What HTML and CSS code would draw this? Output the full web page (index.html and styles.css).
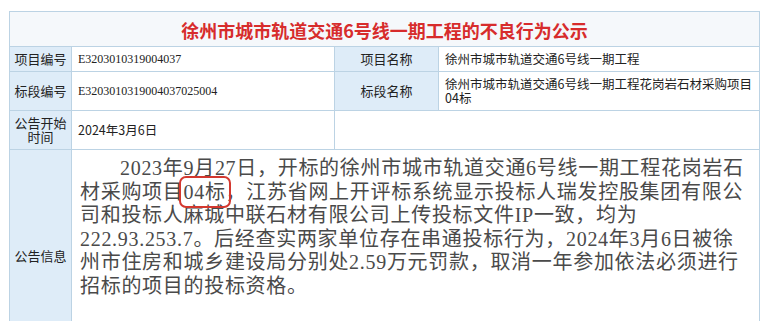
FILE: index.html
```html
<!DOCTYPE html>
<html lang="zh-CN">
<head>
<meta charset="utf-8">
<title>不良行为公示</title>
<link rel="stylesheet" href="styles.css">
</head>
<body>
<table class="notice">
  <colgroup>
    <col class="c1"><col class="c2"><col class="c3"><col class="c4">
  </colgroup>
  <tr class="r-title">
    <td colspan="4" class="title">徐州市城市轨道交通6号线一期工程的不良行为公示</td>
  </tr>
  <tr class="r1">
    <td class="label">项目编号</td>
    <td class="code">E3203010319004037</td>
    <td class="label">项目名称</td>
    <td class="val">徐州市城市轨道交通6号线一期工程</td>
  </tr>
  <tr class="r2">
    <td class="label">标段编号</td>
    <td class="code">E3203010319004037025004</td>
    <td class="label">标段名称</td>
    <td class="val">徐州市城市轨道交通6号线一期工程花岗岩石材采购项目04标</td>
  </tr>
  <tr class="r3">
    <td class="label">公告开始时间</td>
    <td class="val">2024年3月6日</td>
    <td colspan="2" class="empty"></td>
  </tr>
  <tr class="r4">
    <td class="label">公告信息</td>
    <td colspan="3" class="content">
      <p>2023年9月27日，开标的徐州市城市轨道交通6号线一期工程花岗岩石材采购项目<span class="mark">04标</span>，江苏省网上开评标系统显示投标人瑞发控股集团有限公司和投标人麻城中联石材有限公司上传投标文件IP一致，均为222.93.253.7。后经查实两家单位存在串通投标行为，2024年3月6日被徐州市住房和城乡建设局分别处2.59万元罚款，取消一年参加依法必须进行招标的项目的投标资格。</p>
    </td>
  </tr>
</table>
</body>
</html>
```
FILE: styles.css
```css
html, body {
  margin: 0;
  background: #ffffff;
}
body {
  padding: 11px 0 0 9px;
  font-family: "Noto Sans CJK SC", "Noto Sans", sans-serif;
  color: #222;
}
.notice {
  border-collapse: collapse;
  table-layout: fixed;
  width: 750px;
  border: 1px solid #bcd3e4;
}
.c1 { width: 62px; }
.c2 { width: 263px; }
.c3 { width: 104px; }
.c4 { width: 321px; }
.notice td {
  border: 1px solid #bcd3e4;
  padding: 0 6px;
  font-size: 13px;
  line-height: 14px;
  vertical-align: middle;
}
.r-title { height: 35px; }
.r1 { height: 25px; }
.r2 { height: 39px; }
.r3 { height: 39px; }
.r4 { height: 212px; }
.notice td.title {
  background: #f5f8fb;
  text-align: center;
  color: #d72c2c;
  font-size: 18px;
  font-weight: bold;
  line-height: 22px;
  padding-top: 2px;
}
.notice td.label {
  background: #deecf8;
  text-align: center;
  padding: 0 4px;
  color: #222;
}
.notice td.code {
  font-family: "Liberation Serif", serif;
  font-size: 12px;
  color: #222;
}
.notice td.val {
  color: #222;
  font-size: 12.5px;
}
.notice td.content {
  vertical-align: top;
  padding: 7px 12px 0 8px;
}
.content p {
  margin: 0;
  text-indent: 2em;
  font-family: "Liberation Serif", "Noto Sans CJK SC", serif;
  font-size: 20px;
  line-height: 23.5px;
  letter-spacing: 0.7px;
  color: #4a4a4a;
}
.mark {
  outline: 2px solid #d3382f;
  outline-offset: 3px;
  border-radius: 2px;
}
```
